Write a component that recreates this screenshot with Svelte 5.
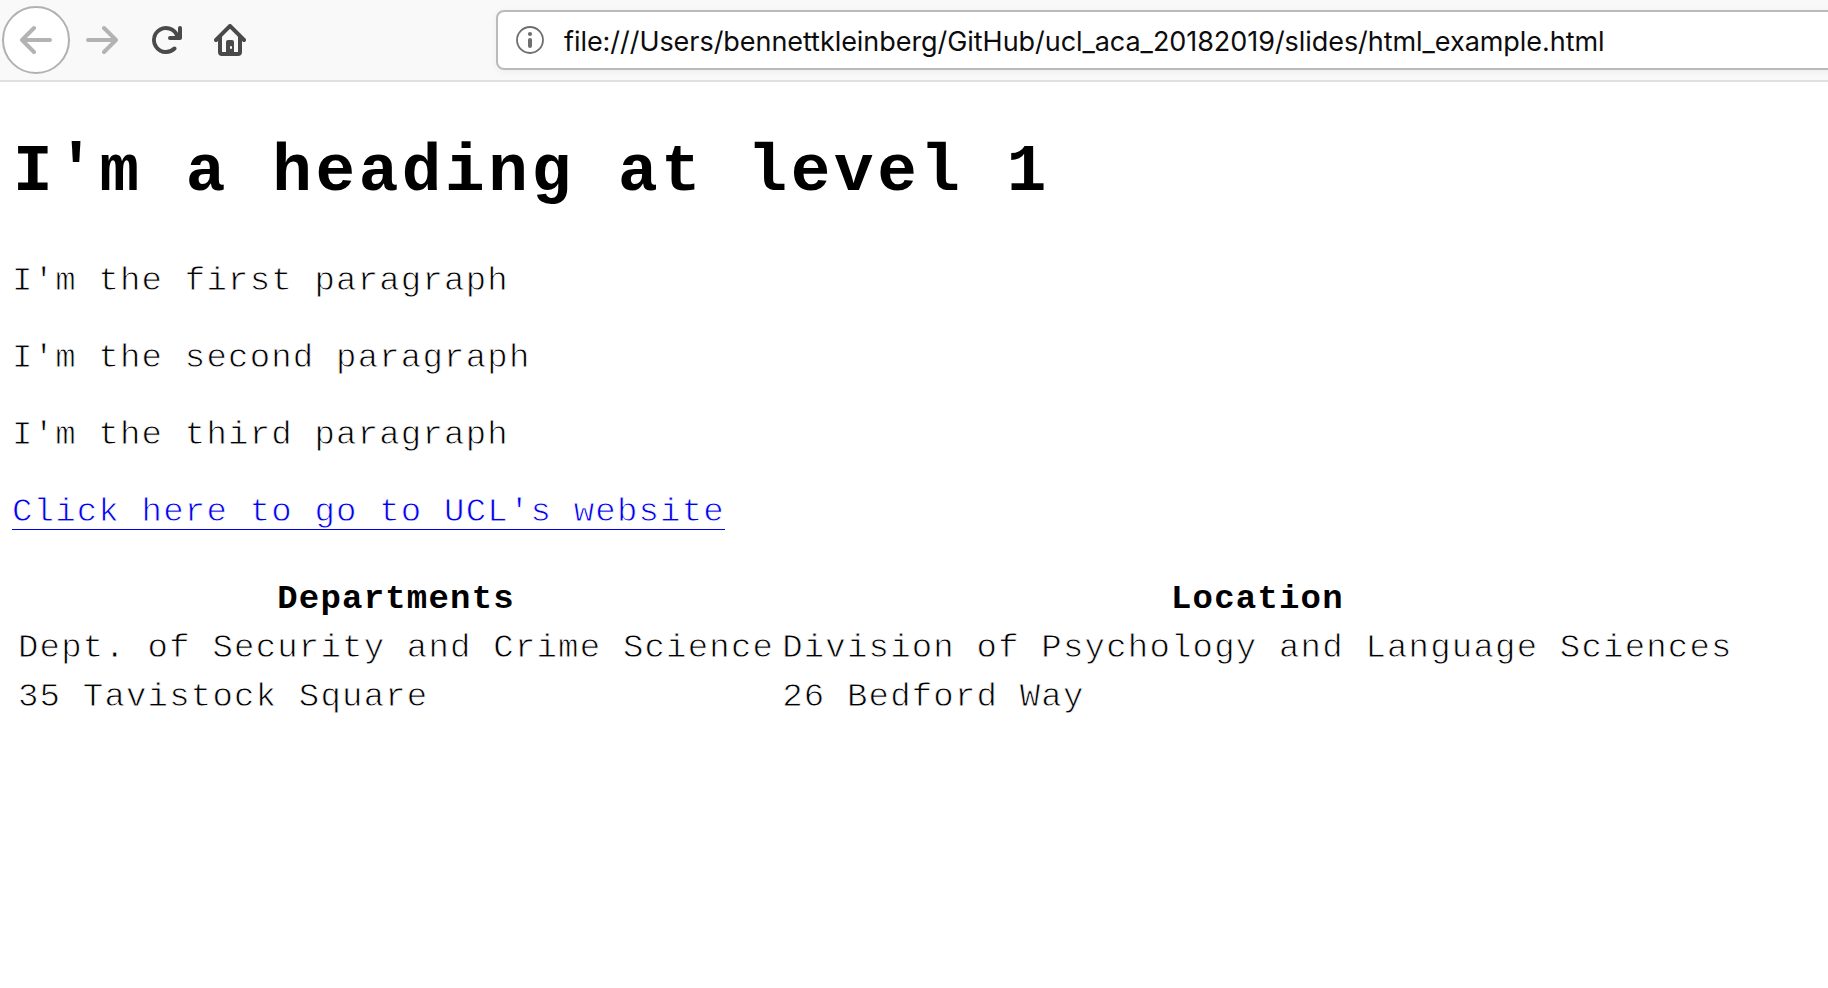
<script>
  const paragraphs = ["I'm the first paragraph", "I'm the second paragraph", "I'm the third paragraph"];
  const columns = ['Departments', 'Location'];
  const rows = [
    ['Dept. of Security and Crime Science', 'Division of Psychology and Language Sciences'],
    ['35 Tavistock Square', '26 Bedford Way'],
  ];
  const arrow =
    'M15 7H3.414l4.293-4.293a1 1 0 0 0-1.414-1.414l-6 6a1 1 0 0 0 0 1.414l6 6a1 1 0 0 0 1.414-1.414L3.414 9H15a1 1 0 0 0 0-2z';
</script>

<div class="window">
  <header class="toolbar">
    <nav class="buttons">
      <button class="back" aria-label="Back">
        <svg viewBox="0 0 16 16"><path d={arrow} /></svg>
      </button>
      <button class="forward" aria-label="Forward">
        <svg viewBox="0 0 16 16"><path d={arrow} transform="translate(16 0) scale(-1 1)" /></svg>
      </button>
      <button class="reload" aria-label="Reload">
        <svg viewBox="0 0 16 16"
          ><path
            d="M15 1a1 1 0 0 0-1 1v2.418A6.995 6.995 0 1 0 8 15a6.954 6.954 0 0 0 4.95-2.05 1 1 0 0 0-1.414-1.414A5.019 5.019 0 1 1 12.549 6H10a1 1 0 0 0 0 2h5a1 1 0 0 0 1-1V2a1 1 0 0 0-1-1z"
          /></svg
        >
      </button>
      <button class="home" aria-label="Home">
        <svg viewBox="0 0 16 16"
          ><path
            fill-rule="evenodd"
            d="M15.707 7.293l-7-7a1 1 0 0 0-1.414 0l-7 7a1 1 0 0 0 1.414 1.414L2 8.414V14a2 2 0 0 0 2 2h8a2 2 0 0 0 2-2V8.414l.293.293a1 1 0 0 0 1.414-1.414zM12 14h-2V9a1 1 0 0 0-1-1H7a1 1 0 0 0-1 1v5H4V6.414l4-4 4 4zM8.5 11a.5.5 0 0 1 .5.5v.5a.5.5 0 0 1-1 0v-.5a.5.5 0 0 1 .5-.5z"
          /></svg
        >
      </button>
    </nav>
    <div class="urlbar">
      <svg class="info" viewBox="0 0 28 28">
        <circle cx="14" cy="14" r="13" fill="none" stroke="#6e6e6e" stroke-width="1.8" />
        <circle cx="14" cy="8" r="2.1" fill="#6e6e6e" />
        <rect x="12" y="12" width="4" height="10" rx="2" fill="#6e6e6e" />
      </svg>
      <span class="url">file:///Users/bennettkleinberg/GitHub/ucl_aca_20182019/slides/html_example.html</span>
    </div>
  </header>

  <main>
    <h1>I'm a heading at level 1</h1>
    {#each paragraphs as text}
      <p>{text}</p>
    {/each}
    <a href="#ucl">Click here to go to UCL's website</a>
    <table>
      <thead>
        <tr>{#each columns as name}<th>{name}</th>{/each}</tr>
      </thead>
      <tbody>
        {#each rows as row}
          <tr>{#each row as cell}<td>{cell}</td>{/each}</tr>
        {/each}
      </tbody>
    </table>
  </main>
</div>

<style>
  :global(body) { margin: 0; background: #fff; }
  .window { height: 988px; overflow: hidden; background: #fff; }
  .toolbar {
    box-sizing: border-box;
    height: 82px;
    display: flex;
    align-items: center;
    background: #f9f9f9;
    border-bottom: 2px solid #e0e0e0;
    overflow: hidden;
  }
  .buttons { display: flex; align-items: center; width: 494px; padding-left: 2px; flex: none; }
  button {
    display: flex;
    align-items: center;
    justify-content: center;
    padding: 0;
    border: 0;
    background: none;
    flex: none;
    width: 64px;
    height: 64px;
    fill: #4a4a4a;
  }
  .back {
    box-sizing: border-box;
    width: 68px;
    height: 68px;
    border: 2px solid #b1b1b1;
    border-radius: 50%;
    background: #fff;
    fill: #b3b3b3;
  }
  .forward { fill: #b3b3b3; }
  button svg { width: 32px; height: 32px; }
  .urlbar {
    box-sizing: border-box;
    flex: none;
    width: 1360px;
    height: 60px;
    padding-left: 18px;
    display: flex;
    align-items: center;
    gap: 20px;
    background: #fff;
    border: 2px solid #bababa;
    border-radius: 8px;
    box-shadow: 0 2px 8px rgba(0, 0, 0, 0.05);
  }
  .info { width: 28px; height: 28px; flex: none; }
  .url {
    padding-top: 3px;
    font: 27px/34px Inter, sans-serif;
    letter-spacing: -0.05px;
    color: #0c0c0d;
    white-space: nowrap;
  }

  main {
    padding: 0 12px;
    font: 34px/41px 'Courier New', 'Liberation Mono', monospace;
    letter-spacing: 1.2px;
    color: #000;
  }
  h1 { margin: 50px 0 47px; padding-left: 1px; font-size: 66px; line-height: 82px; letter-spacing: 3.6px; }
  p { margin: 0 0 36px; }
  p, a, td { -webkit-text-stroke: 0.8px #fff; }
  a {
    display: block;
    width: max-content;
    color: #0000ee;
    text-decoration: none;
    background: linear-gradient(#0000ee, #0000ee) 0 37px / 100% 1px no-repeat;
  }
  table { margin-top: 40px; border-collapse: separate; border-spacing: 4px; }
  th, td { padding: 2px; white-space: nowrap; }
  td { text-align: left; }
</style>
